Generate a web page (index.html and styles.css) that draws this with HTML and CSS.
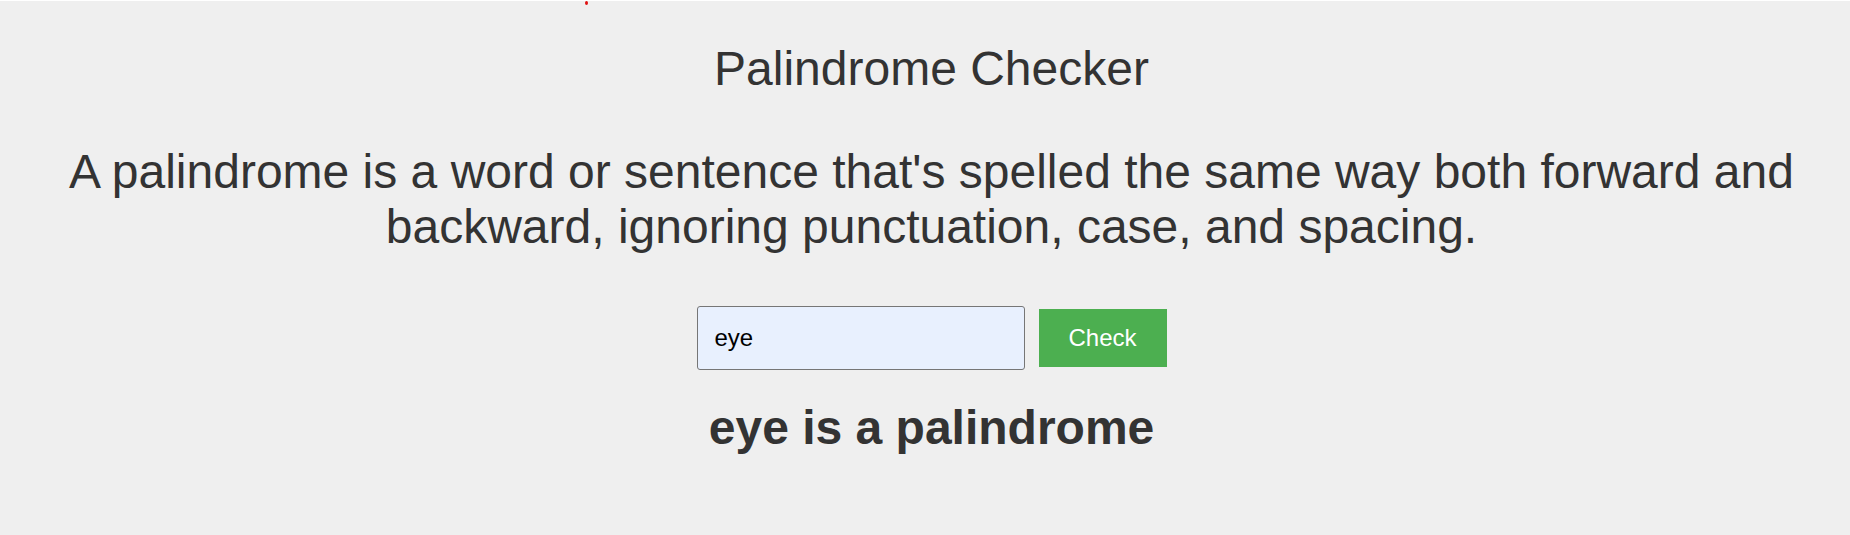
FILE: index.html
```html
<!DOCTYPE html>
<html lang="en">
<head>
<meta charset="utf-8">
<title>Palindrome Checker</title>
<link rel="stylesheet" href="styles.css">
</head>
<body>
<span class="marker"></span>
<main class="page">
  <h1 class="title">Palindrome Checker</h1>
  <p class="intro">A palindrome is a word or sentence that's spelled the same way both forward and backward, ignoring punctuation, case, and spacing.</p>
  <div class="form-row">
    <input class="text-input" type="text" value="eye">
    <button class="check-btn" type="button">Check</button>
  </div>
  <div class="result">eye is a palindrome</div>
</main>
</body>
</html>
```

FILE: styles.css
```css
html {
  background: #efefef;
}

body {
  margin: 0;
  border-top: 1px solid #ffffff;
  background: #efefef;
  font-family: "Liberation Sans", Arial, sans-serif;
  color: #333333;
  min-height: 534px;
  position: relative;
}

.marker {
  position: absolute;
  left: 585px;
  top: 0;
  width: 3px;
  height: 4px;
  border-radius: 50%;
  background: #e01010;
}

.page {
  display: flex;
  flex-direction: column;
  align-items: center;
  text-align: center;
  padding: 40px 0 0 13px;
}

.title {
  margin: 0;
  font-size: 48px;
  font-weight: normal;
  line-height: normal;
}

.intro {
  margin: 48px 0 0;
  font-size: 48px;
  line-height: normal;
}

.form-row {
  display: flex;
  align-items: center;
  gap: 14px;
  margin-top: 51.5px;
}

.text-input {
  box-sizing: border-box;
  width: 328px;
  height: 64px;
  margin: 0;
  padding: 0 17px;
  border: 1px solid #767676;
  border-radius: 3px;
  background: #e8f0fe;
  color: #000000;
  font-family: "Liberation Sans", Arial, sans-serif;
  font-size: 24px;
}

.check-btn {
  box-sizing: border-box;
  width: 128px;
  height: 58px;
  margin: 0;
  padding: 0;
  border: none;
  background: #4caf50;
  color: #ffffff;
  font-family: "Liberation Sans", Arial, sans-serif;
  font-size: 24px;
}

.result {
  margin-top: 30px;
  font-size: 48px;
  font-weight: bold;
  line-height: normal;
}
```
